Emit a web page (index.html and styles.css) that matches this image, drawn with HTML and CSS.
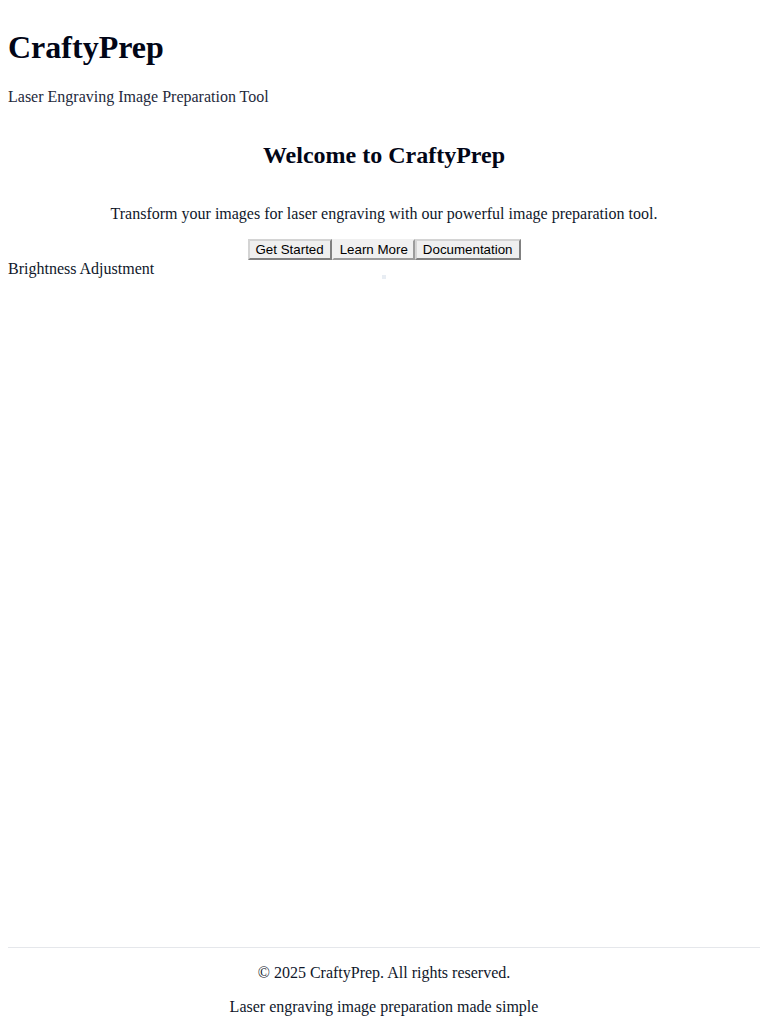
FILE: index.html
```html
<!DOCTYPE html>
<html lang="en">
<head>
<meta charset="utf-8">
<title>CraftyPrep</title>
<link rel="stylesheet" href="styles.css">
</head>
<body>
<div class="app">
  <header class="site-header">
    <h1 class="brand">CraftyPrep</h1>
    <p class="tagline">Laser Engraving Image Preparation Tool</p>
  </header>
  <main class="main">
    <section class="hero">
      <h2 class="hero-title">Welcome to CraftyPrep</h2>
      <p class="hero-text">Transform your images for laser engraving with our powerful image preparation tool.</p>
      <div class="actions"><button class="btn">Get Started</button><button class="btn btn-alt">Learn More</button><button class="btn">Documentation</button></div>
    </section>
    <section class="tool">
      <label class="tool-label">Brightness Adjustment</label>
      <div class="preview"><div class="preview-dot"></div></div>
    </section>
  </main>
  <footer class="site-footer">
    <p class="footer-line">© 2025 CraftyPrep. All rights reserved.</p>
    <p class="footer-line">Laser engraving image preparation made simple</p>
  </footer>
</div>
</body>
</html>
```

FILE: styles.css
```css
html, body {
  background: #ffffff;
}
body {
  margin: 8px;
  font-family: "Liberation Serif", "Times New Roman", serif;
  font-size: 16px;
  color: #0f172a;
}
.app {
  min-height: 100vh;
  display: flex;
  flex-direction: column;
}
.main {
  flex: 1;
}
.brand {
  font-size: 32px;
  margin: 21.44px 0;
  color: #020617;
}
.tagline {
  margin: 16px 0;
  color: #1e293b;
}
.hero {
  text-align: center;
}
.hero-title {
  font-size: 24px;
  margin: 19.92px 0 35.92px;
  color: #020617;
}
.hero-text {
  margin: 16px 0;
}
.actions {
  display: flex;
  justify-content: center;
}
.btn {
  font-family: "Liberation Sans", Arial, sans-serif;
  font-size: 13.333px;
  color: #000;
  background: #efefef;
  border: 2px outset #d4d4d4;
  padding: 1px 6px;
  margin: 0;
}
.btn-alt {
  background: #f0f0f0;
  border-color: #f0f0f0;
  padding: 1px 5px 1px 6px;
}
.tool-label {
  display: block;
}
.preview {
  display: flex;
  justify-content: center;
}
.preview-dot {
  width: 4px;
  height: 4px;
  margin-top: -3px;
  background: #e8edf3;
}
.site-footer {
  border-top: 1px solid #e5e7eb;
  text-align: center;
}
.footer-line {
  margin: 16px 0;
}
```
